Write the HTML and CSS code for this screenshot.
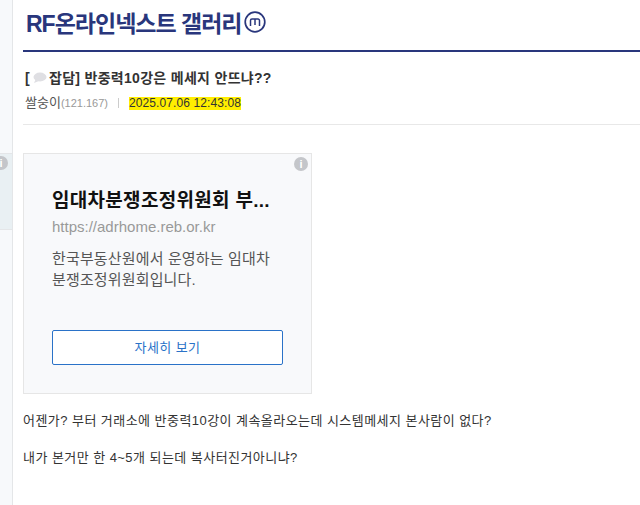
FILE: index.html
```html
<!DOCTYPE html>
<html lang="ko">
<head>
    <meta charset="UTF-8">
    <meta name="viewport" content="width=device-width, initial-scale=1.0">
    <title>RF온라인넥스트 갤러리</title>
    <link rel="stylesheet" href="styles.css">
</head>
<body>

<div class="page">
    <div class="sidebar">
        <div class="side-box">
            <span class="info-dot side-dot">i</span>
        </div>
    </div>

    <div class="content">
        <div class="gall-head">
            <h1>RF온라인넥스트 갤러리</h1>
            <svg class="minor-mark" width="22" height="22" viewBox="0 0 22 22">
                <circle cx="11" cy="11" r="9.8" fill="none" stroke="#29367c" stroke-width="1.7"/>
                <path d="M6.5 15V9.5A1.5 1.5 0 0 1 8 8H14A1.5 1.5 0 0 1 15.5 9.5V15M11 8V14" fill="none" stroke="#29367c" stroke-width="1.5"/>
            </svg>
        </div>

        <div class="post-head">
            <h2 class="post-title">
                <span>[</span>
                <svg class="bubble" width="15" height="12" viewBox="0 0 15 12">
                    <ellipse cx="8" cy="5" rx="6.5" ry="4.4" fill="#dfdfe3"/>
                    <path d="M3.5 7.5L2 11L7 9Z" fill="#dfdfe3"/>
                </svg>
                <span>잡담] 반중력10강은 메세지 안뜨냐??</span>
            </h2>
            <div class="post-info">
                <span class="nick">쌀숭이</span><span class="ip">(121.167)</span>
                <span class="sep"></span>
                <span class="date">2025.07.06 12:43:08</span>
            </div>
        </div>

        <div class="ad-box">
            <span class="info-dot ad-dot">i</span>
            <div class="ad-title">임대차분쟁조정위원회 부...</div>
            <div class="ad-url">https://adrhome.reb.or.kr</div>
            <div class="ad-desc">한국부동산원에서 운영하는 임대차<br>분쟁조정위원회입니다.</div>
            <div class="ad-btn">자세히 보기</div>
        </div>

        <div class="post-body">
            <p>어젠가? 부터 거래소에 반중력10강이 계속올라오는데 시스템메세지 본사람이 없다?</p>
            <p>내가 본거만 한 4~5개 되는데 복사터진거아니냐?</p>
        </div>
    </div>
</div>

</body>
</html>
```

FILE: styles.css
```css
* {
    box-sizing: border-box;
}
html, body {
    margin: 0;
    padding: 0;
    height: 505px;
    overflow: hidden;
}
body {
    font-family: "Liberation Sans", "Noto Sans CJK KR", sans-serif;
    background-color: white;
    color: #333;
}
.page {
    display: flex;
    height: 505px;
}
.sidebar {
    width: 13px;
    flex-shrink: 0;
    padding-top: 153px;
    background-color: #f7f9fb;
    border-right: 1px solid #e4e6e8;
}
.side-box {
    height: 77px;
    background-color: #e9f0f3;
    border-top: 1px solid #e4e6e8;
    border-bottom: 1px solid #e4e6e8;
    position: relative;
    overflow: hidden;
}
.content {
    flex: 1;
    padding-left: 10px;
    min-width: 0;
}
.gall-head {
    display: flex;
    align-items: center;
    gap: 2px;
    height: 52px;
    padding: 0 0 6px 3px;
    border-bottom: 2px solid #29367c;
}
.gall-head h1 {
    margin: 0;
    font-size: 23px;
    font-weight: bold;
    letter-spacing: -1px;
    color: #29367c;
}
.post-head {
    height: 73px;
    padding: 17px 0 0 2px;
    border-bottom: 1px solid #e8e8e8;
}
.post-title {
    display: flex;
    align-items: center;
    gap: 2px;
    margin: 0;
    font-size: 14px;
    line-height: 18px;
    font-weight: bold;
    letter-spacing: 0.3px;
    color: #333;
}
.post-info {
    display: flex;
    align-items: center;
    margin-top: 7px;
    font-size: 13px;
    line-height: 18px;
    color: #555;
}
.ip {
    font-size: 11px;
    color: #999;
}
.sep {
    width: 1px;
    height: 10px;
    margin: 0 10px;
    background-color: #ccc;
}
.date {
    font-size: 12px;
    line-height: 13px;
    letter-spacing: 0.1px;
    color: #333;
    background-color: #ffee00;
}
.ad-box {
    position: relative;
    width: 289px;
    height: 241px;
    margin-top: 28px;
    padding: 34px 28px 0 28px;
    background-color: #f8f9fb;
    border: 1px solid #e6e6e6;
}
.info-dot {
    position: absolute;
    width: 14px;
    height: 14px;
    border-radius: 50%;
    background-color: #c4c6ca;
    color: white;
    font-size: 11px;
    line-height: 14px;
    font-weight: bold;
    text-align: center;
}
.ad-dot {
    top: 3px;
    right: 3px;
}
.side-dot {
    top: 2px;
    right: 4px;
}
.ad-title {
    font-size: 19px;
    line-height: 26px;
    font-weight: bold;
    letter-spacing: 0.3px;
    color: #111;
    white-space: nowrap;
}
.ad-url {
    margin-top: 3px;
    font-size: 15px;
    line-height: 20px;
    color: #999;
}
.ad-desc {
    margin-top: 11px;
    font-size: 15px;
    line-height: 21px;
    letter-spacing: 0.15px;
    color: #555;
}
.ad-btn {
    width: 231px;
    height: 35px;
    margin-top: 40px;
    border: 1px solid #2a72c8;
    border-radius: 2px;
    background-color: white;
    color: #2a72c8;
    font-size: 13px;
    line-height: 33px;
    letter-spacing: 0.4px;
    text-align: center;
}
.post-body {
    margin-top: 17px;
    font-size: 13px;
    line-height: 19px;
    letter-spacing: 0.45px;
    color: #333;
    white-space: nowrap;
}
.post-body p {
    margin: 0 0 18px 0;
}
```
